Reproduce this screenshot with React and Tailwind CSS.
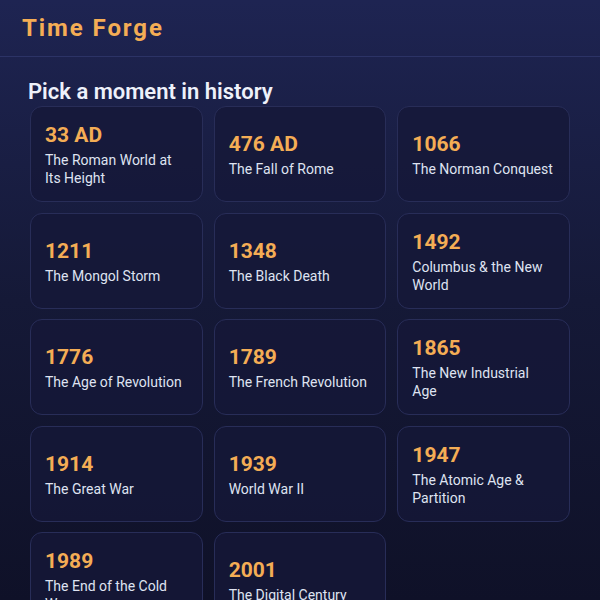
const moments = [
  { year: '33 AD', title: 'The Roman World at Its Height' },
  { year: '476 AD', title: 'The Fall of Rome' },
  { year: '1066', title: 'The Norman Conquest' },
  { year: '1211', title: 'The Mongol Storm' },
  { year: '1348', title: 'The Black Death' },
  { year: '1492', title: 'Columbus & the New World' },
  { year: '1776', title: 'The Age of Revolution' },
  { year: '1789', title: 'The French Revolution' },
  { year: '1865', title: 'The New Industrial Age' },
  { year: '1914', title: 'The Great War' },
  { year: '1939', title: 'World War II' },
  { year: '1947', title: 'The Atomic Age & Partition' },
  { year: '1989', title: 'The End of the Cold War' },
  { year: '2001', title: 'The Digital Century' },
];

const App = () => {
  return (
    <div
      className="min-h-screen h-[600px] overflow-hidden bg-gradient-to-b from-[#1e2452] via-[#151937] to-[#0f1128] text-[#e6e9f5]"
      style={{ fontFamily: 'Roboto, "Noto Sans", sans-serif' }}
    >
      <header className="h-[57px] flex items-center px-[22px] border-b border-[#2c3366]">
        <h1 className="text-[24px] font-bold tracking-[0.08em] text-[#f4ad55]">Time Forge</h1>
      </header>

      <main className="px-[30px] pt-[20px]">
        <h2 className="-ml-[2px] text-[22px] leading-[30px] font-semibold text-[#eef1fa]">Pick a moment in history</h2>

        {/* Moment cards */}
        <div className="grid grid-cols-3 gap-x-[11px] gap-y-[10.5px] mt-[-1px]">
          {moments.map((m) => (
            <button
              key={m.year}
              className="min-h-[96px] flex flex-col justify-center text-left px-[14px] py-3 rounded-xl border border-[#282d58] bg-[#151838]/80"
            >
              <span className="text-[21px] leading-[28px] font-bold text-[#f4ad55]">{m.year}</span>
              <span className="mt-[2px] text-[14px] leading-[18px] text-[#dfe3f1]">{m.title}</span>
            </button>
          ))}
        </div>
      </main>
    </div>
  );
};

export default App;
